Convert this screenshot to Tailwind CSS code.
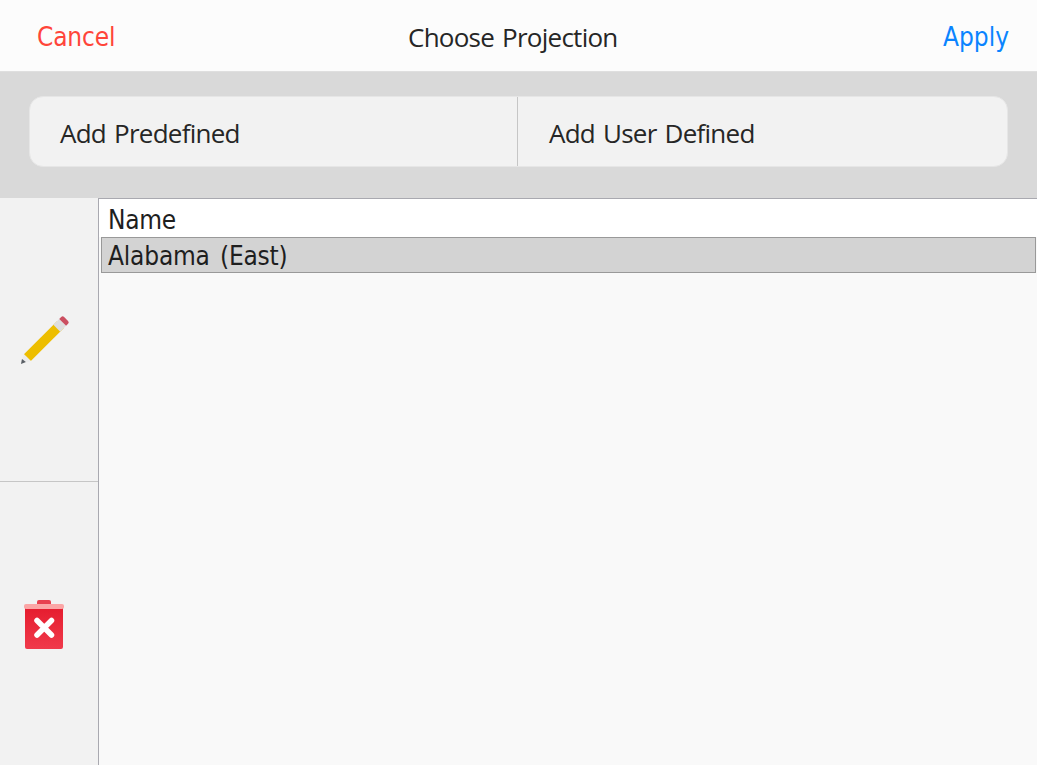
<!DOCTYPE html>
<html lang="en">
<head>
  <meta charset="UTF-8">
  <meta name="viewport" content="width=device-width, initial-scale=1.0">
  <title>Choose Projection</title>
  <script src="https://cdn.jsdelivr.net/npm/@tailwindcss/browser@4"></script>
</head>
<body class="h-screen flex flex-col overflow-hidden bg-[#f2f2f2] font-['Open_Sans','Noto_Sans',sans-serif] text-[26px] leading-9 text-[#262626]">
  <header class="h-[71px] shrink-0 flex items-start bg-[#fcfcfc] pl-[37px] pr-7">
    <button class="w-[371px] mt-[19px] text-left font-['DejaVu_Sans_Condensed','Noto_Sans',sans-serif] tracking-[-0.15px] text-[#ff453a]">Cancel</button>
    <h1 class="flex-1 mt-[19px] tracking-[-0.75px] [word-spacing:2px]">Choose Projection</h1>
    <button class="mt-[19px] font-['DejaVu_Sans_Condensed','Noto_Sans',sans-serif] text-[#0a84ff]">Apply</button>
  </header>

  <section class="h-[127px] shrink-0 bg-[#d9d9d9] border-t border-[#dfdfdf] pt-6 px-[29px]">
    <div class="h-[71px] flex rounded-[14px] bg-[#f2f2f2] border border-[#e6e6e6]">
      <button class="w-[488px] border-r border-[#c6c6c6] pl-[30px] pt-0.5 text-left tracking-[-0.75px] [word-spacing:2px]">Add Predefined</button>
      <button class="flex-1 pl-[31px] pt-0.5 text-left tracking-[-0.75px] [word-spacing:2px]">Add User Defined</button>
    </div>
  </section>

  <main class="flex-1 min-h-0 flex">
    <aside class="w-[98px] shrink-0 flex flex-col">
      <button class="h-[284px] shrink-0 flex items-center border-b border-[#c6c6c6] pl-[21px]">
        <svg class="size-[49px]" viewBox="0 0 50 50">
          <path d="M3 40 37 6l7 7L10 47z" fill="#edbe00"/>
          <path d="M33 10 39 4l7 7-6 6z" fill="#dedede"/>
          <path d="M39 4l2-2q1.500-1.500 3 0l4 4q1.500 1.500 0 3l-2 2z" fill="#cb4f60"/>
          <path d="M3 40l7 7-10 3z" fill="#ececec"/>
          <path d="M1 45l4 3-5 2z" fill="#5a5f66"/>
        </svg>
      </button>
      <button class="h-[284px] shrink-0 flex items-center pl-6 pt-0.5">
        <svg class="w-10 h-[50px]" viewBox="0 0 40 50">
          <defs>
            <linearGradient id="bin" x1="0" y1="0" x2="0" y2="1">
              <stop offset="0" stop-color="#e51c2e"/>
              <stop offset="1" stop-color="#f03a4b"/>
            </linearGradient>
          </defs>
          <path d="M13 5V2q0-2 2-2h10q2 0 2 2v3z" fill="#e8414f"/>
          <path d="M1 7h38v40q0 2-2 2H3q-2 0-2-2z" fill="url(#bin)"/>
          <rect x="0" y="4" width="40" height="5" rx="2" fill="#fba6a6"/>
          <path d="M13 20.500l14.500 14.500m0-14.500l-14.500 14.500" stroke="#fff" stroke-width="5.500" stroke-linecap="round"/>
        </svg>
      </button>
    </aside>

    <div class="flex-1 bg-[#f9f9f9] border-l border-t border-[#a9a9b0] font-['DejaVu_Sans_Condensed','Noto_Sans',sans-serif] text-[#1e1e1e]">
      <div class="h-[38px] bg-white pl-[9px] pt-[3px] tracking-[-0.3px]">Name</div>
      <div class="h-9 ml-0.5 mr-px bg-[#d3d3d3] border border-[#999] pl-1.5 leading-[37px] tracking-[-0.2px] [word-spacing:3px]">Alabama (East)</div>
    </div>
  </main>
</body>
</html>
